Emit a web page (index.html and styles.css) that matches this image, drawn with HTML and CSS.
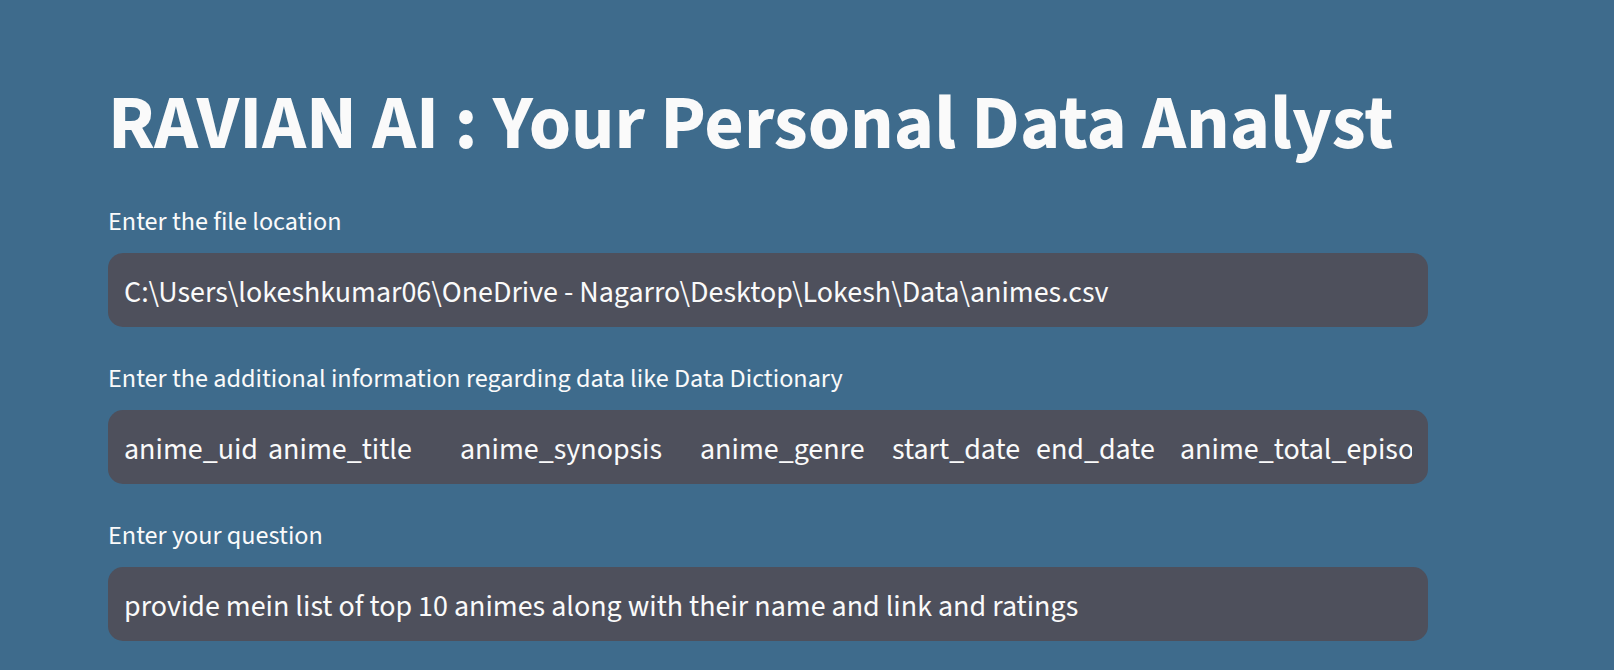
FILE: index.html
```html
<!DOCTYPE html>
<html lang="en">
<head>
<meta charset="utf-8">
<title>RAVIAN AI</title>
<link rel="stylesheet" href="styles.css">
</head>
<body>
<main class="page">
  <h1 class="title">RAVIAN AI : Your Personal Data Analyst</h1>

  <div class="field">
    <label class="label">Enter the file location</label>
    <div class="input"><div class="value">C:\Users\lokeshkumar06\OneDrive - Nagarro\Desktop\Lokesh\Data\animes.csv</div></div>
  </div>

  <div class="field">
    <label class="label">Enter the additional information regarding data like Data Dictionary</label>
    <div class="input"><div class="value"><span class="col c3">anime_uid</span><span class="col c4">anime_title</span><span class="col c5">anime_synopsis</span><span class="col c4">anime_genre</span><span class="col c3">start_date</span><span class="col c3">end_date</span><span class="col last">anime_total_episodes</span></div></div>
  </div>

  <div class="field">
    <label class="label">Enter your question</label>
    <div class="input"><div class="value">provide mein list of top 10 animes along with their name and link and ratings</div></div>
  </div>
</main>
</body>
</html>
```

FILE: styles.css
```css
html, body {
  margin: 0;
  padding: 0;
}
body {
  background: #3e6b8c;
  color: #fafafa;
  font-family: "Source Sans Pro", "Source Sans 3", Lato, "Noto Sans", sans-serif;
  width: 1614px;
  height: 670px;
  overflow: hidden;
}
.page {
  padding: 79px 0 0 108px;
  width: 1320px;
}
.title {
  margin: 0;
  font-size: 76.5px;
  font-weight: 700;
  line-height: 91px;
}
.field {
  margin-top: 37px;
}
.field:first-of-type {
  margin-top: 37px;
}
.label {
  display: block;
  font-size: 26.2px;
  line-height: 30px;
  margin-bottom: 16px;
}
.input {
  background: #4e505c;
  border-radius: 15px;
  height: 74px;
  padding: 0 16px;
  display: flex;
  align-items: center;
}
.value {
  font-size: 30px;
  line-height: 36px;
  white-space: nowrap;
  width: 100%;
  padding-top: 6px;
}
.col {
  display: inline-block;
  vertical-align: top;
}
.c3 { width: 144px; }
.c4 { width: 192px; }
.c5 { width: 240px; }
.last {
  width: 232px;
  overflow: hidden;
}
```
